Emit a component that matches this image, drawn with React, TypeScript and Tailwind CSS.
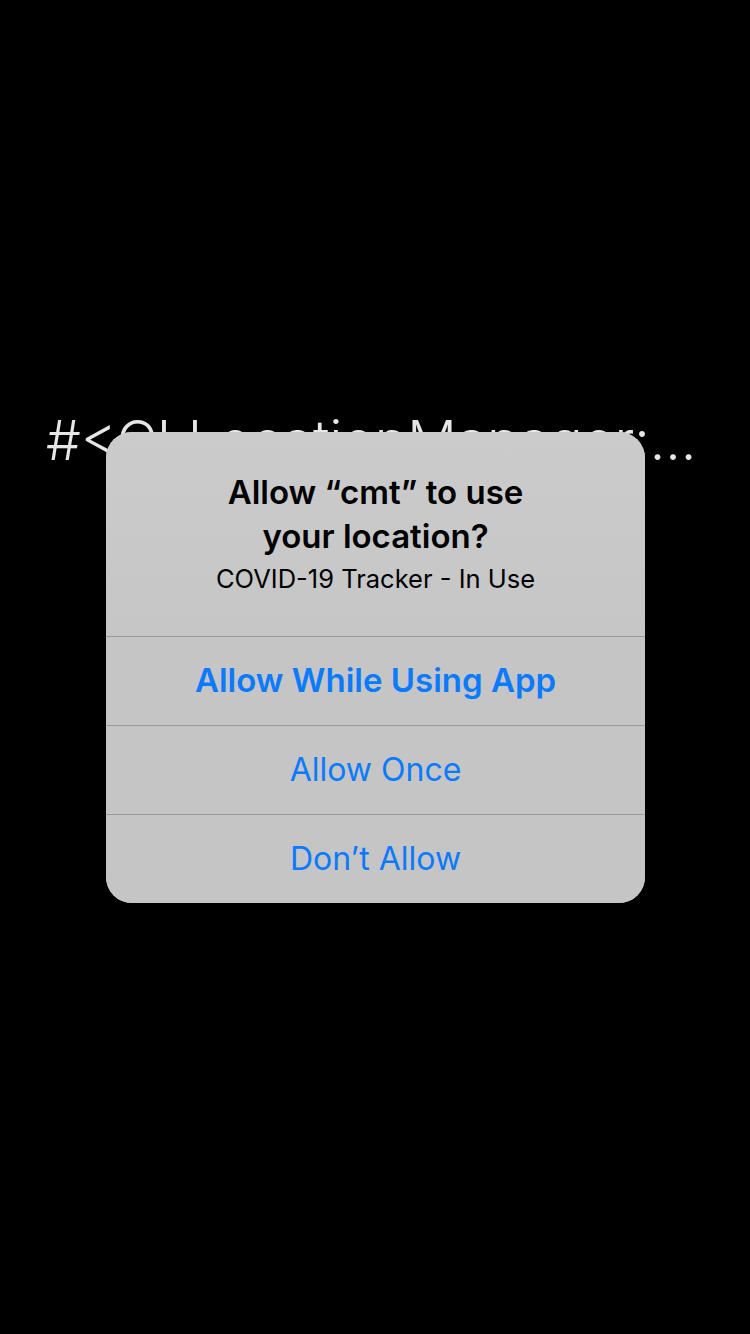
export default function App() {
  const buttons = [
    { label: 'Allow While Using App', bold: true },
    { label: 'Allow Once', bold: false },
    { label: 'Don\u2019t Allow', bold: false },
  ];

  return (
    <div className="relative w-[750px] h-[1334px] bg-black overflow-hidden font-['Inter','Roboto',sans-serif]">
      {/* text behind the alert */}
      <div className="pt-[404px] pl-[46px]">
        <p className="text-[55px] leading-[72px] text-[#e6e6e6] whitespace-nowrap font-light">
          #&lt;CLLocationManager:…
        </p>
      </div>

      {/* alert */}
      <div className="absolute left-[106px] top-[432px] w-[539px] rounded-[26px] bg-[#c7c7c7] overflow-hidden">
        <div className="pt-[38px] pb-[40px] px-8 text-center bg-gradient-to-b from-[#cbcbcb] to-[#c6c6c6]">
          <h1 className="text-[33px] leading-[44px] font-semibold text-black">
            Allow “cmt” to use
            <br />
            your location?
          </h1>
          <p className="mt-[4px] text-[25.5px] leading-[34px] text-black">COVID-19 Tracker - In Use</p>
        </div>
        {buttons.map((b) => (
          <div
            key={b.label}
            className="h-[89px] flex items-center justify-center border-t border-[#9a9a9a] bg-[#c5c5c5]"
          >
            <span className={`text-[#0a7aff] ${b.bold ? 'text-[33px] font-semibold' : 'text-[32px] font-normal'}`}>
              {b.label}
            </span>
          </div>
        ))}
      </div>
    </div>
  );
}
